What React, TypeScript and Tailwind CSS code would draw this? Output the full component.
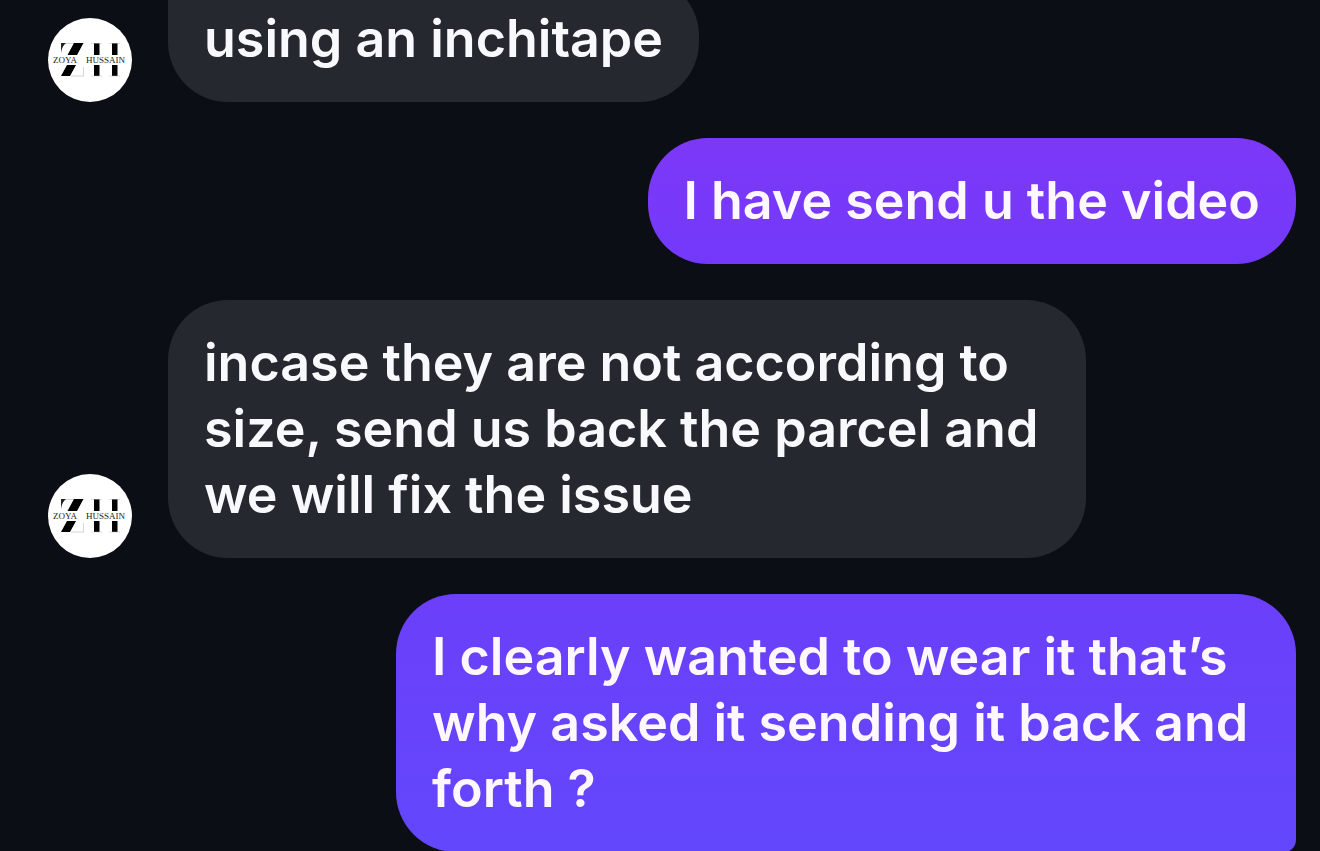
import clsx from "clsx";

type Message = {
    text: string;
    mine?: boolean;
    className?: string;
};

const messages: Message[] = [
    { text: "using an inchitape", className: "rounded-tl-xl" },
    { text: "I have send u the video", mine: true, className: "from-[#7d38f7] to-[#7339fb]" },
    { text: "incase they are not according to size, send us back the parcel and we will fix the issue", className: "max-w-[918px]" },
    { text: "I clearly wanted to wear it that’s why asked it sending it back and forth ?", mine: true, className: "max-w-[900px] rounded-br-xl from-[#6c3ffb] to-[#6247fc]" },
];

const Avatar = () => {
    return (
        <svg viewBox="0 0 84 84" className="size-[84px] shrink-0" role="img" aria-label="Zoya Hussain">
            <circle cx="42" cy="42" r="42" fill="#fff" />
            {/* monogram */}
            <path d="M17 25.500H26M23 58H35.500V49" stroke="#bbb" strokeWidth="0.6" fill="none" />
            <path d="M13 25H18Q14 28 13 35Z" fill="#222" />
            <path d="M26 25H35.500L29 37H19.500ZM19 47H28L22 58H13ZM46 25H51.500V37H46ZM46 47H51.500V58H46ZM64 25H69.500V37H64ZM64 47H69.500V58H64Z" fill="#000" />
            <path d="M43 25.500H54M61 25.500H72M43 58H54M61 58H72" stroke="#bbb" strokeWidth="0.5" />
            {/* name band */}
            <text x="5" y="45" fontSize="9" fill="#222" className="font-['Liberation_Serif',serif]">ZOYA</text>
            <text x="38" y="45" fontSize="9" fill="#222" className="font-['Liberation_Serif',serif]">HUSSAIN</text>
        </svg>
    );
};

const Bubble = ({ text, mine, className }: Message) => {
    return (
        <p
            className={clsx(
                "rounded-[60px] px-9 py-[30px] text-[52px] leading-[66px] font-semibold",
                mine ? "bg-gradient-to-b text-[#fdf7ff]" : "bg-[#25282f] text-[#f8f9fd]",
                className
            )}
        >
            {text}
        </p>
    );
};

export default function App() {
    return (
        <main className="h-screen overflow-hidden bg-[#0b0e14] font-['Inter',sans-serif]">
            {/* first message is scrolled partly out of view */}
            <div className="-mt-6 flex flex-col gap-9 pr-6 pl-12">
                {messages.map((message) => (
                    <div key={message.text} className={clsx("flex items-end gap-9", message.mine && "justify-end")}>
                        {!message.mine && <Avatar />}
                        <Bubble {...message} />
                    </div>
                ))}
            </div>
        </main>
    );
}
